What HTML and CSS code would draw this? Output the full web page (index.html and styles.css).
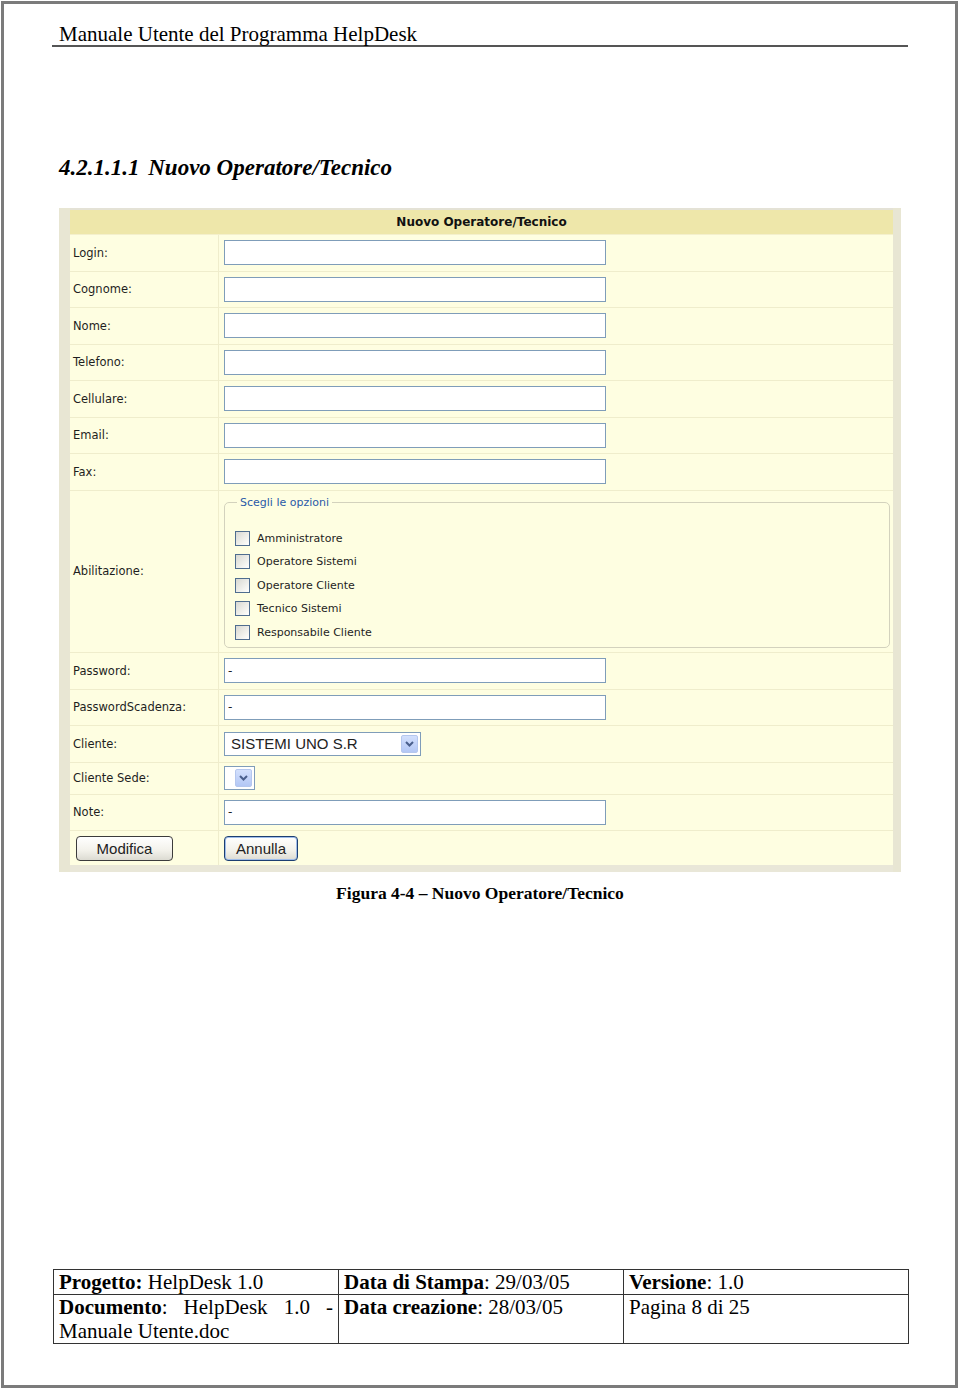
FILE: index.html
```
<!DOCTYPE html>
<html lang="it">
<head>
    <meta charset="UTF-8">
    <meta name="viewport" content="width=device-width, initial-scale=1.0">
    <title>Manuale Utente del Programma HelpDesk - Pagina 8</title>
    <link rel="stylesheet" href="styles.css">
</head>
<body>
    <div class="page">
        <header class="doc-header">Manuale Utente del Programma HelpDesk</header>

        <h1 class="section-title"><span class="section-num">4.2.1.1.1</span> Nuovo Operatore/Tecnico</h1>

        <div class="shot">
            <div class="shot-side"></div>
            <div class="shot-main">
                <div class="shot-title">Nuovo Operatore/Tecnico</div>

                <div class="form-row">
                    <div class="form-label">Login:</div>
                    <div class="form-field"><input class="text-input" type="text"></div>
                </div>
                <div class="form-row">
                    <div class="form-label">Cognome:</div>
                    <div class="form-field"><input class="text-input" type="text"></div>
                </div>
                <div class="form-row">
                    <div class="form-label">Nome:</div>
                    <div class="form-field"><input class="text-input" type="text"></div>
                </div>
                <div class="form-row">
                    <div class="form-label">Telefono:</div>
                    <div class="form-field"><input class="text-input" type="text"></div>
                </div>
                <div class="form-row">
                    <div class="form-label">Cellulare:</div>
                    <div class="form-field"><input class="text-input" type="text"></div>
                </div>
                <div class="form-row">
                    <div class="form-label">Email:</div>
                    <div class="form-field"><input class="text-input" type="text"></div>
                </div>
                <div class="form-row">
                    <div class="form-label">Fax:</div>
                    <div class="form-field"><input class="text-input" type="text"></div>
                </div>

                <div class="form-row row-tall">
                    <div class="form-label">Abilitazione:</div>
                    <div class="form-field">
                        <fieldset class="options">
                            <legend>Scegli le opzioni</legend>
                            <label class="option"><span class="check"></span>Amministratore</label>
                            <label class="option"><span class="check"></span>Operatore Sistemi</label>
                            <label class="option"><span class="check"></span>Operatore Cliente</label>
                            <label class="option"><span class="check"></span>Tecnico Sistemi</label>
                            <label class="option"><span class="check"></span>Responsabile Cliente</label>
                        </fieldset>
                    </div>
                </div>

                <div class="form-row">
                    <div class="form-label">Password:</div>
                    <div class="form-field"><input class="text-input" type="text" value="-"></div>
                </div>
                <div class="form-row">
                    <div class="form-label">PasswordScadenza:</div>
                    <div class="form-field"><input class="text-input" type="text" value="-"></div>
                </div>
                <div class="form-row">
                    <div class="form-label">Cliente:</div>
                    <div class="form-field">
                        <div class="select select-wide">
                            <span class="select-text">SISTEMI UNO S.R</span>
                            <span class="select-arrow">
                                <svg width="9" height="6" viewBox="0 0 9 6"><path d="M1 1l3.5 3.5L8 1" fill="none" stroke="#4a5f8c" stroke-width="2"/></svg>
                            </span>
                        </div>
                    </div>
                </div>
                <div class="form-row row-short">
                    <div class="form-label">Cliente Sede:</div>
                    <div class="form-field">
                        <div class="select select-small">
                            <span class="select-arrow">
                                <svg width="9" height="6" viewBox="0 0 9 6"><path d="M1 1l3.5 3.5L8 1" fill="none" stroke="#4a5f8c" stroke-width="2"/></svg>
                            </span>
                        </div>
                    </div>
                </div>
                <div class="form-row">
                    <div class="form-label">Note:</div>
                    <div class="form-field"><input class="text-input" type="text" value="-"></div>
                </div>
                <div class="form-row row-buttons">
                    <div class="form-label"><button class="xp-btn btn-modifica">Modifica</button></div>
                    <div class="form-field"><button class="xp-btn btn-annulla">Annulla</button></div>
                </div>
            </div>
            <div class="shot-side right"></div>
        </div>

        <p class="caption">Figura 4-4 – Nuovo Operatore/Tecnico</p>

        <table class="doc-footer">
            <tr>
                <td><b>Progetto:</b> HelpDesk 1.0</td>
                <td><b>Data di Stampa</b>: 29/03/05</td>
                <td><b>Versione</b>: 1.0</td>
            </tr>
            <tr class="footer-tall">
                <td class="justify"><b>Documento</b>: HelpDesk 1.0 - Manuale Utente.doc</td>
                <td><b>Data creazione</b>: 28/03/05</td>
                <td>Pagina 8 di 25</td>
            </tr>
        </table>
    </div>
</body>
</html>
```

FILE: styles.css
```
* {
    margin: 0;
    padding: 0;
    box-sizing: border-box;
}

body {
    background: #fff;
    color: #000;
    font-family: "Liberation Serif", "Times New Roman", serif;
}

.page {
    width: 957px;
    height: 1387px;
    margin: 1px;
    border: 3px solid #7b7b7b;
    padding: 0 47px 0 48px;
    display: flex;
    flex-direction: column;
}

.doc-header {
    margin-top: 20px;
    padding-left: 7px;
    font-size: 21px;
    line-height: 21px;
    border-bottom: 2px solid #555;
}

.section-title {
    margin-top: 108px;
    padding-left: 7px;
    font-size: 23px;
    line-height: 25px;
    font-style: italic;
    font-weight: bold;
}

.section-num {
    margin-right: 3px;
}

/* screenshot of the form */

.shot {
    margin: 28px 0 0 7px;
    width: 842px;
    display: flex;
    background: #e8e6d3;
}

.shot-side {
    width: 11px;
}

.shot-side.right {
    width: 8px;
}

.shot-main {
    flex: 1;
    border-top: 2px solid #e4e2d6;
    border-bottom: 7px solid #e9e7d8;
    background: #fefee1;
    font-family: "DejaVu Sans", Verdana, sans-serif;
    color: #1e1e1e;
}

.shot-title {
    height: 25px;
    background: #eee7aa;
    border-bottom: 1px solid #f4f0cc;
    text-align: center;
    font-size: 12px;
    font-weight: bold;
    line-height: 24px;
    color: #111;
}

.form-row {
    display: grid;
    grid-template-columns: 149px 1fr;
    height: 36.5px;
    border-bottom: 1px solid #efedcc;
}

.row-tall {
    height: 162.5px;
}

.row-short {
    height: 32px;
}

.row-buttons {
    height: 34px;
    border-bottom: none;
}

.form-label {
    display: flex;
    align-items: center;
    padding-left: 3px;
    border-right: 1px solid #efedcc;
    font-size: 11.5px;
}

.form-field {
    display: flex;
    align-items: center;
    padding-left: 5px;
}

.text-input {
    width: 382px;
    height: 25px;
    border: 1px solid #7f9db9;
    background: #fff;
    padding: 0 3px;
    font-family: "DejaVu Sans", Verdana, sans-serif;
    font-size: 12px;
    color: #222;
    outline: none;
}

/* options group */

.options {
    align-self: stretch;
    flex: 1;
    margin: 5px 3px 4px 0;
    border: 1px solid #d3d2bd;
    border-radius: 5px;
    padding: 18px 0 0 10px;
}

.options legend {
    margin-left: 2px;
    padding: 0 3px;
    font-size: 11px;
    color: #2a5aa8;
}

.option {
    display: flex;
    align-items: center;
    height: 23.5px;
    font-size: 11px;
}

.check {
    width: 15px;
    height: 15px;
    margin-right: 7px;
    border: 1px solid #4f6d8f;
    background: linear-gradient(135deg, #d8d8d2, #f4f4f0 70%, #fff);
}

/* combo boxes */

.select {
    display: flex;
    align-items: center;
    height: 24px;
    border: 1px solid #7f9db9;
    background: #fff;
    padding: 2px;
}

.select-wide {
    width: 197px;
}

.select-small {
    width: 31px;
    justify-content: flex-end;
}

.select-text {
    flex: 1;
    padding-left: 4px;
    font-family: "Liberation Sans", Arial, sans-serif;
    font-size: 15px;
    color: #222;
}

.select-arrow {
    width: 17px;
    height: 18px;
    display: flex;
    align-items: center;
    justify-content: center;
    border: 1px solid #b5c7ee;
    border-radius: 2px;
    background: linear-gradient(#d3e0fd, #b3c7f5);
}

/* buttons */

.xp-btn {
    height: 25px;
    border: 1px solid #3c3c3c;
    border-radius: 4px;
    background: linear-gradient(#ffffff, #f2f1ea 60%, #dcdbd2);
    font-family: "Liberation Sans", Arial, sans-serif;
    font-size: 15px;
    color: #222;
}

.btn-modifica {
    width: 97px;
    margin-left: 3px;
}

.btn-annulla {
    width: 74px;
    border-color: #1d3f72;
    box-shadow: inset 0 0 0 1px #9fbdea;
}

.caption {
    margin-top: 11px;
    text-align: center;
    font-size: 17.5px;
    line-height: 20px;
    font-weight: bold;
}

/* footer table */

.doc-footer {
    margin: auto 0 41px 1px;
    width: 854px;
    border-collapse: collapse;
    table-layout: fixed;
    font-size: 21px;
    line-height: 24px;
}

.doc-footer td {
    width: 285px;
    border: 1px solid #333;
    padding: 0 5px;
    vertical-align: top;
}

.doc-footer .footer-tall td {
    height: 49px;
}

.doc-footer .justify {
    text-align: justify;
}
```
